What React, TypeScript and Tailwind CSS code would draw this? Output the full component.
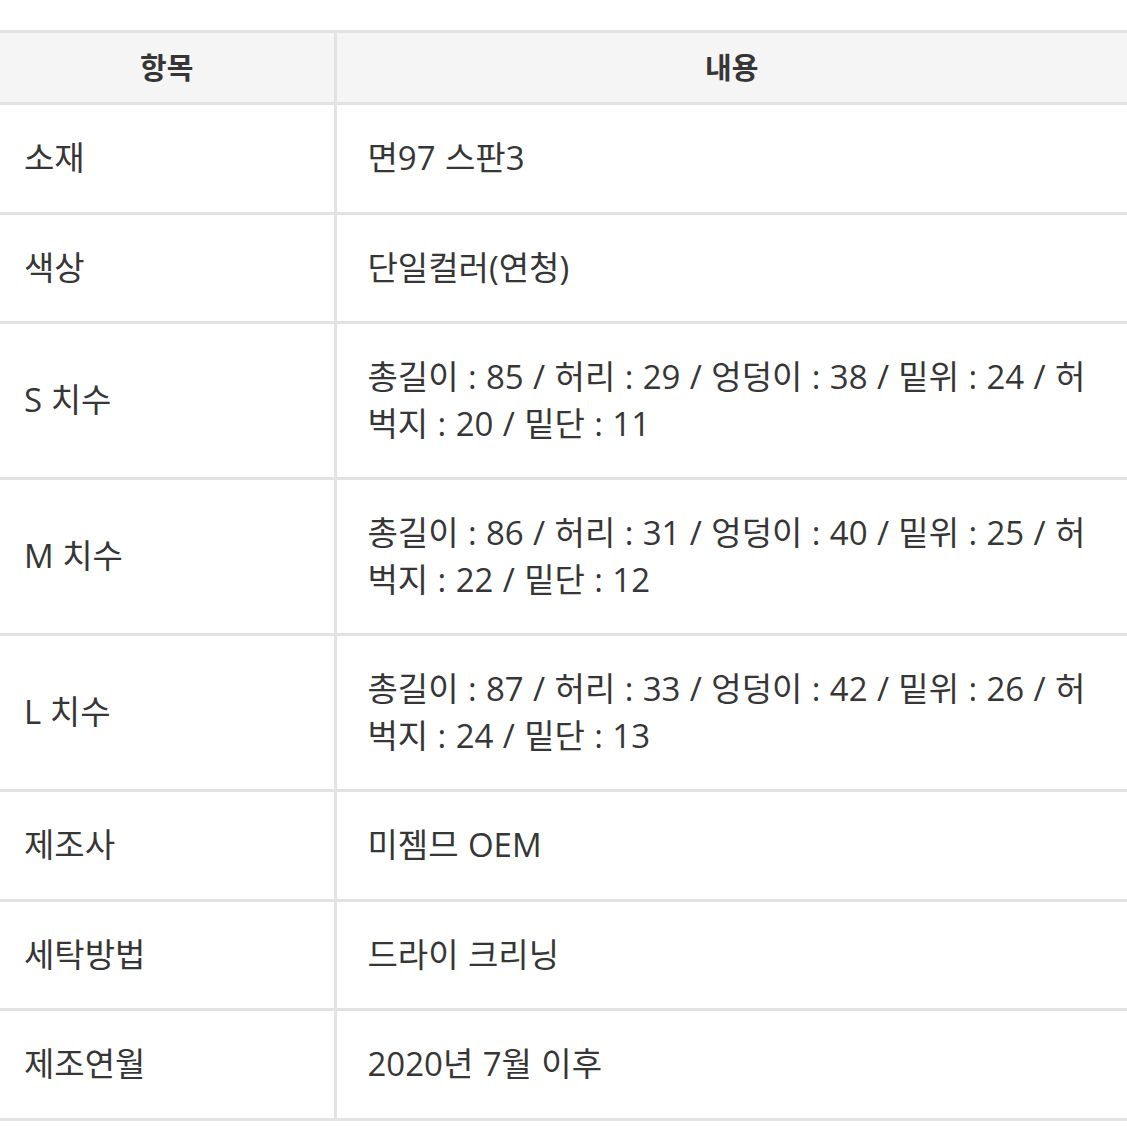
import React from "react";

const rows: [string, string][] = [
  ["소재", "면97 스판3"],
  ["색상", "단일컬러(연청)"],
  ["S 치수", "총길이 : 85 / 허리 : 29 / 엉덩이 : 38 / 밑위 : 24 / 허벅지 : 20 / 밑단 : 11"],
  ["M 치수", "총길이 : 86 / 허리 : 31 / 엉덩이 : 40 / 밑위 : 25 / 허벅지 : 22 / 밑단 : 12"],
  ["L 치수", "총길이 : 87 / 허리 : 33 / 엉덩이 : 42 / 밑위 : 26 / 허벅지 : 24 / 밑단 : 13"],
  ["제조사", "미젬므 OEM"],
  ["세탁방법", "드라이 크리닝"],
  ["제조연월", "2020년 7월 이후"],
];

export default function App() {
  return (
    <div
      className="w-[1127px] h-[1127px] bg-white overflow-hidden pt-[30px] text-[#363636]"
      style={{ fontFamily: '"Open Sans", "Noto Sans CJK KR", sans-serif' }}
    >
      <table className="border-collapse table-fixed w-[1127px]">
        <colgroup>
          <col className="w-[335px]" />
          <col className="w-[792px]" />
        </colgroup>
        <thead>
          <tr className="bg-[#f5f5f5]">
            <th className="border-t-[3px] border-b-[3px] border-r-[3px] border-[#e3e3e3] h-[72px] text-[29px] font-bold leading-[47px] text-center align-middle">
              항목
            </th>
            <th className="border-t-[3px] border-b-[3px] border-[#e3e3e3] h-[72px] text-[29px] font-bold leading-[47px] text-center align-middle">
              내용
            </th>
          </tr>
        </thead>
        <tbody>
          {rows.map(([k, v]) => (
            <tr key={k}>
              <td className="border-b-[3px] border-r-[3px] border-[#e3e3e3] pl-[24px] py-[30px] text-[33px] leading-[46.5px] align-middle font-normal">
                {k}
              </td>
              <td className="border-b-[3px] border-[#e3e3e3] pl-[31px] pr-[32px] py-[30px] text-[33px] leading-[46.5px] align-middle font-normal break-all [word-spacing:0.8px]">
                {v}
              </td>
            </tr>
          ))}
        </tbody>
      </table>
    </div>
  );
}
